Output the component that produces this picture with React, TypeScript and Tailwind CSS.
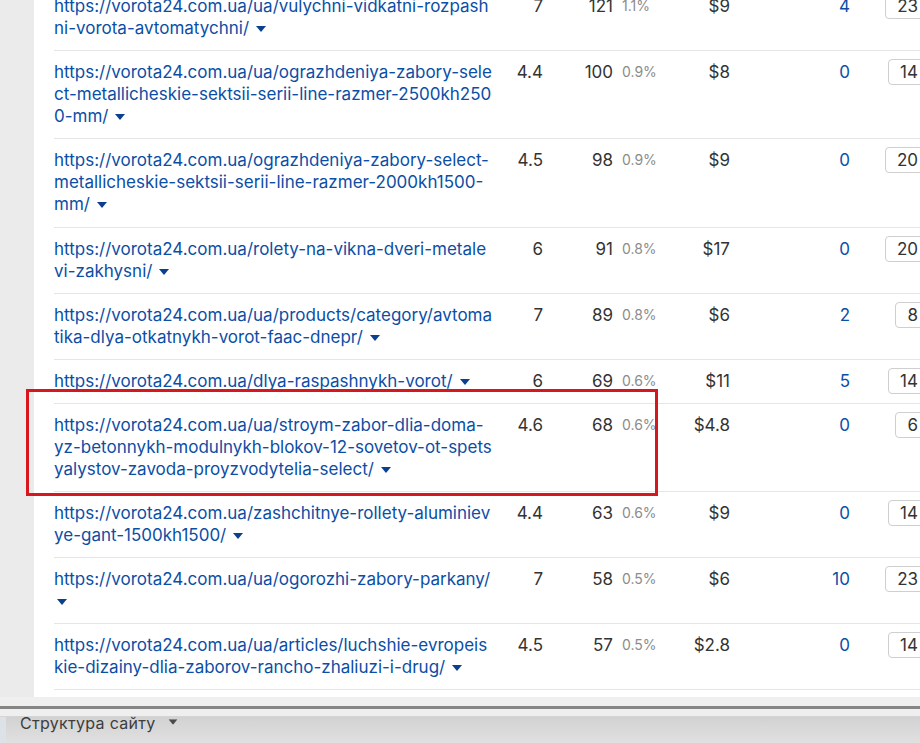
import React from "react";

type Row = {
  url: string[];
  kd: string;
  volume: string;
  share: string;
  cpc: string;
  links: string;
  pos: string;
};

const rows: Row[] = [
  { url: ["https://vorota24.com.ua/ua/vulychni-vidkatni-rozpash", "ni-vorota-avtomatychni/"], kd: "7", volume: "121", share: "1.1%", cpc: "$9", links: "4", pos: "23" },
  { url: ["https://vorota24.com.ua/ua/ograzhdeniya-zabory-sele", "ct-metallicheskie-sektsii-serii-line-razmer-2500kh250", "0-mm/"], kd: "4.4", volume: "100", share: "0.9%", cpc: "$8", links: "0", pos: "14" },
  { url: ["https://vorota24.com.ua/ograzhdeniya-zabory-select-", "metallicheskie-sektsii-serii-line-razmer-2000kh1500-", "mm/"], kd: "4.5", volume: "98", share: "0.9%", cpc: "$9", links: "0", pos: "20" },
  { url: ["https://vorota24.com.ua/rolety-na-vikna-dveri-metale", "vi-zakhysni/"], kd: "6", volume: "91", share: "0.8%", cpc: "$17", links: "0", pos: "20" },
  { url: ["https://vorota24.com.ua/ua/products/category/avtoma", "tika-dlya-otkatnykh-vorot-faac-dnepr/"], kd: "7", volume: "89", share: "0.8%", cpc: "$6", links: "2", pos: "8" },
  { url: ["https://vorota24.com.ua/dlya-raspashnykh-vorot/"], kd: "6", volume: "69", share: "0.6%", cpc: "$11", links: "5", pos: "14" },
  { url: ["https://vorota24.com.ua/ua/stroym-zabor-dlia-doma-", "yz-betonnykh-modulnykh-blokov-12-sovetov-ot-spets", "yalystov-zavoda-proyzvodytelia-select/"], kd: "4.6", volume: "68", share: "0.6%", cpc: "$4.8", links: "0", pos: "6" },
  { url: ["https://vorota24.com.ua/zashchitnye-rollety-aluminiev", "ye-gant-1500kh1500/"], kd: "4.4", volume: "63", share: "0.6%", cpc: "$9", links: "0", pos: "14" },
  { url: ["https://vorota24.com.ua/ua/ogorozhi-zabory-parkany/", ""], kd: "7", volume: "58", share: "0.5%", cpc: "$6", links: "10", pos: "23" },
  { url: ["https://vorota24.com.ua/ua/articles/luchshie-evropeis", "kie-dizainy-dlia-zaborov-rancho-zhaliuzi-i-drug/"], kd: "4.5", volume: "57", share: "0.5%", cpc: "$2.8", links: "0", pos: "14" },
];

const Caret = ({ className }: { className?: string }) => (
  <svg width="10" height="6" viewBox="0 0 10 6" className={className}>
    <path d="M0 0h10L5 6z" fill="currentColor" />
  </svg>
);

const UrlCell: React.FC<{ lines: string[] }> = ({ lines }) => (
  <div className="w-[446px] shrink-0 text-[#0b4ea6]">
    {lines.map((line, i) => (
      <div key={i} className="whitespace-nowrap h-[22px]">
        {line}
        {i === lines.length - 1 && (
          <Caret className={`inline-block align-middle text-[#0b3f8f] ${line ? "ml-[7px]" : "ml-[3px]"}`} />
        )}
      </div>
    ))}
  </div>
);

export default function App() {
  return (
    <div
      className="relative w-[920px] h-[743px] overflow-hidden bg-white text-[17px] leading-[22px]"
      style={{ fontFamily: "Inter, 'Noto Sans', sans-serif" }}
    >
      <div className="flex h-[697px] overflow-hidden">
        <div className="w-[34px] shrink-0 bg-[#ebebeb]" />
        <div className="flex-1 pl-[20px]">
          <div className="-mt-[15px]">
            {rows.map((r, idx) => (
              <div
                key={idx}
                className={`flex pt-[10px] border-b border-[#e6e6e6] w-[876px] ${idx === 2 ? "pb-[12px]" : "pb-[11px]"}`}
              >
                <UrlCell lines={r.url} />
                <div className="w-[43px] shrink-0 text-right text-[#333]">{r.kd}</div>
                <div className="w-[70px] shrink-0 text-right text-[#333]">{r.volume}</div>
                <div className="w-[58px] shrink-0 pl-[9px] text-[14px] text-[#8c8c8c]">{r.share}</div>
                <div className="w-[59px] shrink-0 text-right text-[#333]">{r.cpc}</div>
                <div className="w-[120px] shrink-0 text-right text-[#0b4ea6]">{r.links}</div>
                <div className="w-[80px] shrink-0 flex justify-end items-center h-[22px]">
                  <div className="h-[26px] flex items-center px-[11px] border border-[#cfcfcf] rounded-[4px] text-[#333]">
                    {r.pos}
                  </div>
                </div>
              </div>
            ))}
          </div>
        </div>
      </div>

      <div className="h-[9px] bg-[#efefef]" />
      <div className="h-[3px] bg-[#858585]" />
      <div className="h-[8px] bg-[#efefef] border-b border-[#d4d4d4]" />
      <div className="flex h-[26px] bg-gradient-to-b from-[#d2d2d2] to-[#e0e0e0]">
        <div className="w-[6px] bg-[#dde1e8]" />
        <div className="flex items-start pl-[14px] gap-[12px] pt-[1px]">
          <span className="text-[16px] leading-[11px] text-[#3d3d3d] tracking-[0.3px]">Структура сайту</span>
          <Caret className="mt-[1px] text-[#4a4a4a] scale-90" />
        </div>
      </div>

      <div className="absolute left-[26px] top-[389px] w-[632px] h-[107px] border-[3px] border-[#d7161d]" />
    </div>
  );
}
